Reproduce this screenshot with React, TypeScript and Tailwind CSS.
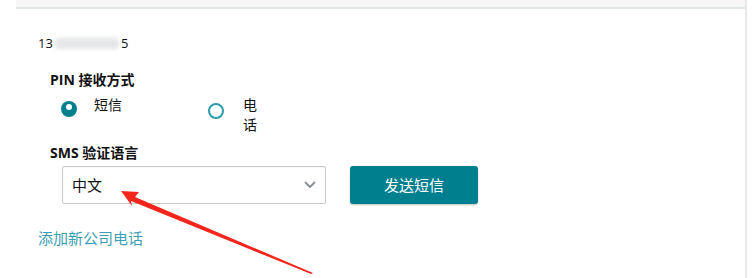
import React from "react";

const FONT = { fontFamily: '"Open Sans", "Noto Sans", "Noto Sans CJK SC", sans-serif' };

function Radio({ checked }: { checked?: boolean }) {
  if (checked) {
    return (
      <span className="flex h-[16px] w-[16px] shrink-0 items-start justify-center rounded-full bg-[#00808f] pt-[3px]">
        <span className="block h-[6px] w-[6px] rounded-full bg-white" />
      </span>
    );
  }
  return <span className="block h-[16px] w-[16px] shrink-0 rounded-full border-2 border-[#2e9aaa] bg-white" />;
}

export default function App() {
  return (
    <div className="relative h-[278px] w-[752px] overflow-hidden bg-white text-[#111]" style={FONT}>
      <div className="ml-[16px] flex h-full w-[731px] flex-col border-r-2 border-[#e6e8e8]">
        <div className="h-[9px] shrink-0 border-b-2 border-[#e1e7e7] bg-[#f7f7f7]" />

        <div className="flex items-center pl-[22px] pt-[27px] text-[13px] leading-[14px]">
          <span>13</span>
          <span className="mx-[2px] h-[11px] w-[64px] rounded-sm bg-[#e4e6e8] blur-[2px]" />
          <span>5</span>
        </div>

        <div className="pl-[34px] pt-[22px] text-[14px] font-bold leading-[16px]">PIN 接收方式</div>

        <div className="flex pl-[45px] pt-[7px] text-[14px] leading-[20px]">
          <div className="flex w-[147px] items-start">
            <span className="mt-[6px] block"><Radio checked /></span>
            <span className="ml-[17px]">短信</span>
          </div>
          <div className="flex items-start">
            <span className="mt-[8px] block"><Radio /></span>
            <span className="ml-[19px] w-[15px]">电话</span>
          </div>
        </div>

        <div className="pl-[34px] pt-[10px] text-[14px] font-bold leading-[16px]">SMS 验证语言</div>

        <div className="flex items-center pl-[46px] pt-[5px]">
          <div className="flex h-[38px] w-[264px] items-center justify-between rounded-[2px] border border-[#c7c9cb] bg-white pl-[9px] pr-[9px] shadow-[inset_0_1px_1px_rgba(0,0,0,0.04)]">
            <span className="text-[15px]">中文</span>
            <svg width="12" height="8" viewBox="0 0 12 8" fill="none">
              <path d="M1.5 1.5 6 6 10.5 1.5" stroke="#8a9098" strokeWidth="1.8" strokeLinecap="round" strokeLinejoin="round" />
            </svg>
          </div>
          <button className="ml-[24px] flex h-[38px] w-[128px] items-center justify-center rounded-[3px] bg-[#00808f] text-[15px] text-white shadow-[0_1px_2px_rgba(0,0,0,0.25)]">
            发送短信
          </button>
        </div>

        <div className="pl-[22px] pt-[25px] text-[15px] leading-[18px] text-[#3a9fb2]">添加新公司电话</div>
      </div>

      <svg className="pointer-events-none absolute left-0 top-0" width="752" height="278" viewBox="0 0 752 278">
        <polygon points="121,191 139,192 135,197 313,273 311,274 131,201 132,206" fill="#f2261c" />
      </svg>
    </div>
  );
}
